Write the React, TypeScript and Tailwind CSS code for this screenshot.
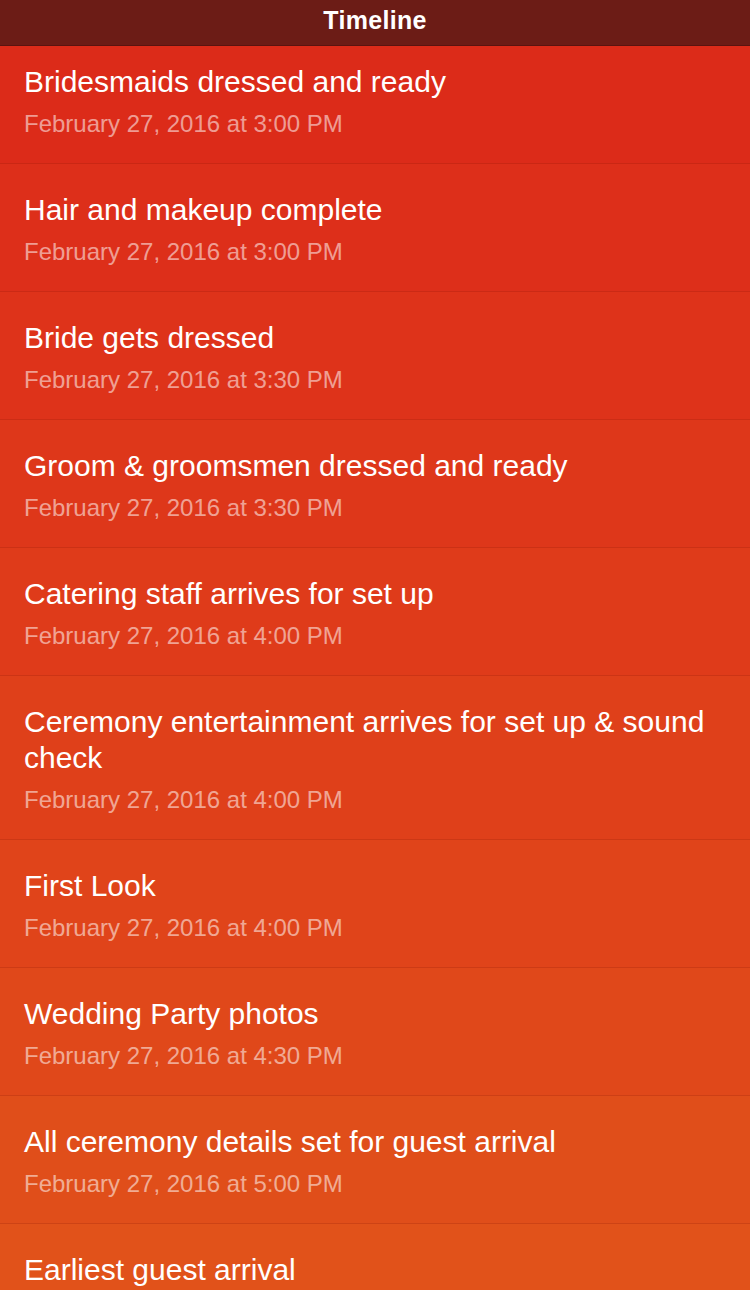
import React from "react";

const items: { title: string; date: string; bg: string; first?: boolean }[] = [
  { title: "Bridesmaids dressed and ready", date: "February 27, 2016 at 3:00 PM", bg: "bg-[#dc2b19]", first: true },
  { title: "Hair and makeup complete", date: "February 27, 2016 at 3:00 PM", bg: "bg-[#dd2f1a]" },
  { title: "Bride gets dressed", date: "February 27, 2016 at 3:30 PM", bg: "bg-[#de331a]" },
  { title: "Groom & groomsmen dressed and ready", date: "February 27, 2016 at 3:30 PM", bg: "bg-[#de371a]" },
  { title: "Catering staff arrives for set up", date: "February 27, 2016 at 4:00 PM", bg: "bg-[#df3b1a]" },
  { title: "Ceremony entertainment arrives for set up & sound check", date: "February 27, 2016 at 4:00 PM", bg: "bg-[#df401a]" },
  { title: "First Look", date: "February 27, 2016 at 4:00 PM", bg: "bg-[#e0441a]" },
  { title: "Wedding Party photos", date: "February 27, 2016 at 4:30 PM", bg: "bg-[#e0481a]" },
  { title: "All ceremony details set for guest arrival", date: "February 27, 2016 at 5:00 PM", bg: "bg-[#e04e1a]" },
  { title: "Earliest guest arrival", date: "February 27, 2016 at 5:30 PM", bg: "bg-[#e1521a]" },
];

export default function App() {
  return (
    <div className="w-[750px] h-[1290px] overflow-hidden bg-[#e1521a] font-['Liberation_Sans',Arial,sans-serif]">
      <div className="h-[46px] bg-[#6c1c16] flex items-center justify-center border-b border-[#5a1410]">
        <span className="text-white text-[25px] font-semibold tracking-[0.3px] leading-none -mt-[4px]">Timeline</span>
      </div>
      {items.map((it, i) => (
        <div
          key={i}
          className={`${it.bg} border-b border-[rgba(120,20,0,0.18)] pl-6 pr-6 ${it.first ? "pt-[18px]" : "pt-[28px]"} pb-[25px]`}
        >
          <div className="text-white text-[30px] leading-[36px]">{it.title}</div>
          <div className="mt-[10px] text-[rgba(255,255,255,0.55)] text-[24px] leading-[28px]">{it.date}</div>
        </div>
      ))}
    </div>
  );
}
